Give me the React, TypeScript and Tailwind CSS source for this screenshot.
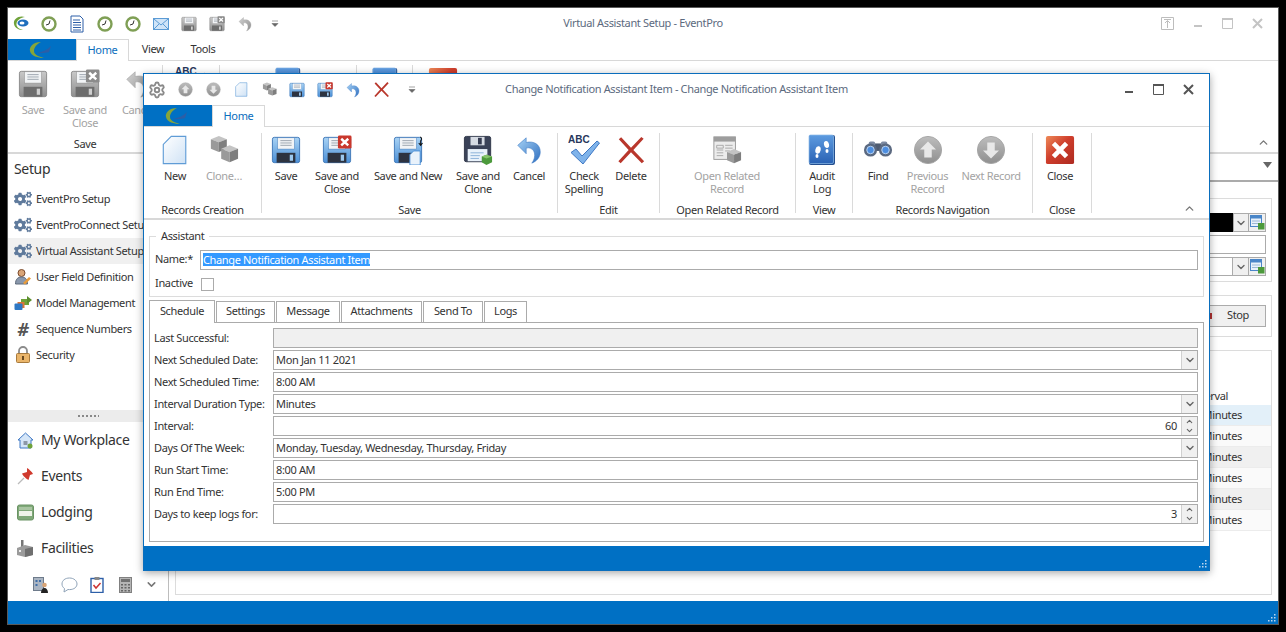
import React from 'react';
import { FaCogs } from 'react-icons/fa';
import { ChevronDown, ChevronUp, Settings } from 'lucide-react';

type Tone = 'blue' | 'gray';
type IconProps = { s?: number };

const FLOPPY: Record<Tone, { top: string; bottom: string; edge: string; dark: string }> = {
  blue: { top: '#a9d3f5', bottom: '#4b8fd6', edge: '#3f78b8', dark: '#2d3340' },
  gray: { top: '#c9c9c9', bottom: '#8f8f8f', edge: '#8a8a8a', dark: '#6d6d6d' },
};

const Floppy = ({ s = 30, tone = 'blue', children }: IconProps & { tone?: Tone; children?: React.ReactNode }) => {
  const c = FLOPPY[tone];
  return (
    <svg width={s} height={s} viewBox="0 0 32 32">
      <defs>
        <linearGradient id={`floppy-${tone}`} x1="0" y1="0" x2="0" y2="1">
          <stop offset="0" stopColor={c.top} />
          <stop offset="1" stopColor={c.bottom} />
        </linearGradient>
      </defs>
      <rect x="1.500" y="2.500" width="29" height="27" rx="2" fill={`url(#floppy-${tone})`} stroke={c.edge} />
      <rect x="7" y="3" width="18" height="12" fill="#f2f4f6" stroke={c.edge} strokeWidth="0.5" />
      <path d="M10 6h12M10 8.500h12M10 11h12" stroke="#9aa3ad" strokeWidth="1" />
      <rect x="6" y="19" width="20" height="10.500" fill={c.dark} />
      <rect x="20" y="21" width="3.500" height="6.500" fill={tone === 'blue' ? '#9cc8ee' : '#cfcfcf'} />
      {children}
    </svg>
  );
};

const XBadge = ({ tone = 'red' }: { tone?: 'red' | 'gray' }) => (
  <g>
    <rect x="17" y="0.500" width="14.500" height="14" rx="1.500" fill={tone === 'red' ? '#c9372c' : '#8b8b8b'} />
    <path d="M20.500 4l7.500 7M28 4l-7.500 7" stroke="#fff" strokeWidth="2.600" />
  </g>
);

const SaveNew = ({ s = 30 }: IconProps) => (
  <Floppy s={s}>
    <path d="M22 17h7v15H18v-11z" fill="#e9f2fb" stroke="#4b8fd6" />
    <path d="M29 2c2 1 2 3 0 5M29.500 6v4M27.500 8.500l2 2.500 2-2.500" fill="none" stroke="#111" strokeWidth="1.100" />
  </Floppy>
);

const SaveClone = ({ s = 30 }: IconProps) => (
  <svg width={s} height={s} viewBox="0 0 32 32">
    <rect x="1.500" y="1.500" width="28" height="27" rx="2" fill="#3a4258" stroke="#2e3547" />
    <rect x="8" y="2" width="15" height="9" fill="#d6dbe3" />
    <rect x="16" y="3" width="4" height="7" fill="#343b50" />
    <rect x="5" y="15" width="21" height="13" fill="#e9f2fb" />
    <path d="M8 19h14M8 22h10M8 25h9" stroke="#8ab0d8" />
    <path d="M20 23l5-2 6 2v6l-6 3-5-3z" fill="#4c9a3c" />
    <path d="M20 23l5 2 6-2-6-2z" fill="#86c56c" />
  </svg>
);

const Undo = ({ s = 30, tone = 'blue' }: IconProps & { tone?: Tone }) => (
  <svg width={s} height={s} viewBox="0 0 32 32">
    <defs>
      <linearGradient id={`undo-${tone}`} x1="0" y1="0" x2="1" y2="1">
        <stop offset="0" stopColor={tone === 'blue' ? '#a6d2f5' : '#d2d2d2'} />
        <stop offset="1" stopColor={tone === 'blue' ? '#2f6fc0' : '#8d8d8d'} />
      </linearGradient>
    </defs>
    <path
      d="M4 11 13 3V8C21 6 28 10 28 18 28 24 24 28 19 30 22 26 23 21 21 17 19 14 16 13 13 14V20z"
      fill={`url(#undo-${tone})`}
      stroke={tone === 'blue' ? '#3a78c2' : '#a0a0a0'}
      strokeWidth="0.600"
    />
  </svg>
);

const RedCross = ({ s = 30 }: IconProps) => (
  <svg width={s} height={s} viewBox="0 0 32 32">
    <path d="M3 4.500 5.500 2.500 16 13.500 27 2l2.500 2L18.500 16 30 28l-2.500 2L16 18.500 5 30l-2.500-2L13.500 16z" fill="#b9372c" />
  </svg>
);

const NewDoc = ({ s = 30 }: IconProps) => (
  <svg width={s} height={s} viewBox="0 0 32 32">
    <defs>
      <linearGradient id="new-doc" x1="0" y1="0" x2="1" y2="1">
        <stop offset="0" stopColor="#ffffff" />
        <stop offset="1" stopColor="#cfe2f5" />
      </linearGradient>
    </defs>
    <path d="M12 1.500h15.500v29H3.500V10z" fill="url(#new-doc)" stroke="#5f9cd6" strokeWidth="1.200" />
  </svg>
);

const Cube = ({ x, y, r }: { x: number; y: number; r: number }) => (
  <g>
    <path d={`M${x} ${y + r * 0.4}L${x + r} ${y}L${x + 2 * r} ${y + r * 0.4}L${x + r} ${y + r * 0.8}z`} fill="#c4c4c4" />
    <path d={`M${x} ${y + r * 0.4}L${x + r} ${y + r * 0.8}V${y + r * 2}L${x} ${y + r * 1.6}z`} fill="#9a9a9a" />
    <path d={`M${x + 2 * r} ${y + r * 0.4}L${x + r} ${y + r * 0.8}V${y + r * 2}L${x + 2 * r} ${y + r * 1.6}z`} fill="#7e7e7e" />
  </g>
);

const Cubes = ({ s = 30 }: IconProps) => (
  <svg width={s} height={s} viewBox="0 0 32 32">
    <Cube x={2} y={1} r={8.500} />
    <Cube x={13} y={11} r={9} />
  </svg>
);

const CheckAbc = ({ s = 32 }: IconProps) => (
  <svg width={s} height={s} viewBox="0 0 32 32">
    <text x="0" y="9" fontSize="10" fontWeight="700" letterSpacing="0" fill="#27375c" fontFamily="Liberation Sans, sans-serif">ABC</text>
    <path d="M3 18.500 8 15l6 7L29 7l2.500 2L15 30z" fill="#7fb3ea" stroke="#3f78c4" />
  </svg>
);

const OpenRelated = ({ s = 30 }: IconProps) => (
  <svg width={s} height={s} viewBox="0 0 32 32">
    <rect x="2" y="2" width="23" height="24" fill="#ececec" stroke="#999" />
    <rect x="2" y="2" width="23" height="5" fill="#9d9d9d" />
    <path d="M5 11h7v3H5zM5 16h7M5 19h7M5 22h7M14 11h8M14 14h8M14 17h5" fill="none" stroke="#a8a8a8" />
    <Cube x={16} y={15} r={7.500} />
  </svg>
);

const AuditLog = ({ s = 32 }: IconProps) => (
  <svg width={s} height={s} viewBox="0 0 32 32">
    <defs>
      <linearGradient id="audit-log" x1="0" y1="0" x2="0" y2="1">
        <stop offset="0" stopColor="#5d9be0" />
        <stop offset="1" stopColor="#2a62b4" />
      </linearGradient>
    </defs>
    <rect x="3" y="1" width="26" height="30" rx="2" fill="#244f8f" />
    <rect x="3" y="1" width="24.500" height="28.500" rx="1.500" fill="url(#audit-log)" stroke="#8dbbe9" strokeWidth="0.700" />
    <ellipse cx="12" cy="16" rx="2.600" ry="3.800" fill="#fff" transform="rotate(14 12 16)" />
    <ellipse cx="11" cy="22" rx="1.500" ry="2" fill="#fff" />
    <ellipse cx="20.500" cy="10.500" rx="2.500" ry="3.600" fill="#fff" transform="rotate(-12 20.500 10.500)" />
    <ellipse cx="21" cy="17" rx="1.500" ry="2" fill="#fff" />
  </svg>
);

const Binoculars = ({ s = 30 }: IconProps) => (
  <svg width={s} height={s} viewBox="0 0 32 32">
    <rect x="11" y="9" width="10" height="8" fill="#4f5c72" />
    <rect x="6" y="7" width="7" height="5" rx="2" fill="#7d8aa1" />
    <rect x="19" y="7" width="7" height="5" rx="2" fill="#7d8aa1" />
    <circle cx="8" cy="16" r="7" fill="#5b6980" />
    <circle cx="24" cy="16" r="7" fill="#5b6980" />
    <circle cx="8" cy="16" r="4" fill="#4d8ee0" stroke="#c1d9f5" />
    <circle cx="24" cy="16" r="4" fill="#4d8ee0" stroke="#c1d9f5" />
  </svg>
);

const CircleArrow = ({ s = 30, dir }: IconProps & { dir: 'up' | 'down' }) => (
  <svg width={s} height={s} viewBox="0 0 32 32">
    <defs>
      <linearGradient id="circle-arrow" x1="0" y1="0" x2="0" y2="1">
        <stop offset="0" stopColor="#bdbdbd" />
        <stop offset="1" stopColor="#8f8f8f" />
      </linearGradient>
    </defs>
    <circle cx="16" cy="16" r="14.500" fill="url(#circle-arrow)" stroke="#a5a5a5" />
    <path
      d={dir === 'up' ? 'M16 7l8.500 8.500H20V24h-8v-8.500H7.500z' : 'M16 25l8.500-8.500H20V8h-8v8.500H7.500z'}
      fill="#e8e8e8"
    />
  </svg>
);

const CloseBox = ({ s = 30 }: IconProps) => (
  <svg width={s} height={s} viewBox="0 0 32 32">
    <defs>
      <linearGradient id="close-box" x1="0" y1="0" x2="1" y2="1">
        <stop offset="0" stopColor="#ee8a58" />
        <stop offset="0.450" stopColor="#cf3e2c" />
        <stop offset="1" stopColor="#ad2a20" />
      </linearGradient>
    </defs>
    <rect x="1" y="1" width="30" height="30" rx="2" fill="url(#close-box)" />
    <path d="M9 9l14 14M23 9 9 23" stroke="#fff" strokeWidth="5" />
  </svg>
);

const Clock = () => (
  <svg width="16" height="16" viewBox="0 0 16 16">
    <circle cx="8" cy="8" r="6.500" fill="#fff" stroke="#7f9f55" strokeWidth="2.400" />
    <path d="M9 4.500 8 8 5 9" fill="none" stroke="#333" strokeWidth="1" />
  </svg>
);

const DocLines = () => (
  <svg width="16" height="18" viewBox="0 0 16 18">
    <path d="M2 1h9l3 3v13H2z" fill="#fff" stroke="#2d5fa8" />
    <path d="M4 5h7M4 7.500h8M4 10h8M4 12.500h8M4 15h8" stroke="#2d5fa8" />
  </svg>
);

const Mail = () => (
  <svg width="16" height="14" viewBox="0 0 16 14">
    <rect x="0.500" y="1.500" width="15" height="11" fill="#cfe4f8" stroke="#5b9bd5" />
    <path d="M1 2l7 6 7-6M1 12l5-5M15 12l-5-5" fill="none" stroke="#5b9bd5" />
  </svg>
);

const AppLogo = () => (
  <svg width="17" height="17" viewBox="0 0 17 17">
    <path d="M12 2C6 0 0 4 1 9c.8 4 5 6 9 6-4-1-7-3-6.500-6.500C4 5 8 2.500 12 2z" fill="#6fa23a" />
    <ellipse cx="10" cy="8" rx="5.500" ry="3.500" fill="#1f6fbd" />
    <ellipse cx="9" cy="8" rx="2.500" ry="1.500" fill="#fff" />
  </svg>
);

const TabLogo = () => (
  <svg width="26" height="18" viewBox="0 0 26 18">
    <path d="M12 1C4 1 0 6 1 10c1 5 8 7 14 7-5-1.500-10-3-10-7 0-4 3-7 7-9z" fill="#86a53a" />
    <path d="M8 12c5-1 10-3 14-7l-2 6c-3 1-7 1.500-12 1z" fill="#2c5ea6" />
  </svg>
);

const QatMenu = () => (
  <svg width="8" height="8" viewBox="0 0 8 8">
    <path d="M1 1h6M1 3.500h6l-3 3z" fill="#666" stroke="#666" strokeWidth="0.600" />
  </svg>
);

const UserField = () => (
  <svg width="18" height="18" viewBox="0 0 18 18">
    <circle cx="7.500" cy="5" r="3.500" fill="#d9a577" stroke="#7b4a2c" />
    <path d="M1.500 16c0-5 2.500-7 6-7s6 2 6 7z" fill="#8a98ac" stroke="#5f6b7b" />
    <path d="M9 15l6-6 2 1.500-6 6z" fill="#e89b3a" />
  </svg>
);

const ModelMgmt = () => (
  <svg width="18" height="18" viewBox="0 0 18 18">
    <rect x="7" y="5" width="8" height="6" fill="#6fa23a" />
    <path d="M13 2l5 4-5 4z" fill="#5c8f2e" />
    <rect x="3.500" y="8" width="7" height="6" fill="#d9743a" />
    <rect x="0.500" y="9.500" width="8" height="6.500" rx="1" fill="#2f78c4" />
  </svg>
);

const Lock = () => (
  <svg width="16" height="18" viewBox="0 0 16 18">
    <path d="M4 8V5a4 4 0 0 1 8 0v3" fill="none" stroke="#8b8b8b" strokeWidth="1.800" />
    <rect x="1.500" y="7.500" width="13" height="9" rx="1" fill="#eab56a" stroke="#a87a3c" />
    <rect x="7" y="10" width="2" height="4" fill="#6b4a1f" />
  </svg>
);

const House = () => (
  <svg width="17" height="17" viewBox="0 0 17 17">
    <path d="M8.500 1 1 8h2v8h11V8h2z" fill="#d5e6f8" stroke="#3f78c4" />
    <rect x="6.500" y="9" width="4" height="4" fill="#8c98a8" />
    <circle cx="13" cy="14" r="2.500" fill="#6fa23a" />
  </svg>
);

const Pin = () => (
  <svg width="17" height="17" viewBox="0 0 17 17">
    <path d="M1 16l6-6" stroke="#bbb" strokeWidth="1.200" />
    <path d="M10 0c2 1 5 4 6 6l-3 1-1.500 5c-2-1-5.500-4-6.500-6.500l5-1.500z" fill="#d03a2e" />
  </svg>
);

const Bed = () => (
  <svg width="17" height="17" viewBox="0 0 17 17">
    <rect x="0.500" y="1" width="16" height="15" rx="2" fill="#7fa878" stroke="#6a9364" />
    <rect x="2" y="7" width="13" height="5" fill="#eef3e8" />
    <rect x="2" y="3" width="13" height="3" fill="#a9c5a2" />
  </svg>
);

const Factory = () => (
  <svg width="18" height="17" viewBox="0 0 18 17">
    <rect x="5" y="0" width="2.500" height="7" fill="#777" />
    <path d="M1 8l8-3 8 2v8l-8 2-8-2z" fill="#9b9b9b" />
    <path d="M9 9l8-2v8l-8 2z" fill="#6f6f6f" />
    <rect x="3" y="10" width="2" height="2" fill="#eee" />
  </svg>
);

const BuildingUser = () => (
  <svg width="16" height="16" viewBox="0 0 16 16">
    <rect x="0.500" y="0.500" width="10" height="13" fill="#aab5c3" stroke="#6e7b8b" />
    <path d="M2.500 3h2v2h-2zM6 3h2v2H6zM2.500 7h2v2h-2z" fill="#3f6ea8" />
    <circle cx="11.500" cy="8" r="2.300" fill="#d9a577" />
    <path d="M8 16c0-3 1.500-5 3.500-5s3.500 2 3.500 5z" fill="#222" />
  </svg>
);

const Bubble = () => (
  <svg width="17" height="16" viewBox="0 0 17 16">
    <path d="M8.500 1C4 1 1 3.500 1 7c0 2 1 3.500 2.500 4.500L3 15l4-2.500c.5.100 1 .100 1.500.100 4.500 0 7.500-2.500 7.500-5.600S13 1 8.500 1z" fill="#fff" stroke="#8fa3b8" />
  </svg>
);

const Clipboard = () => (
  <svg width="14" height="16" viewBox="0 0 14 16">
    <rect x="1" y="1.500" width="12" height="14" fill="#fff" stroke="#2d5fa8" strokeWidth="1.400" />
    <rect x="4.500" y="0" width="5" height="3" fill="#888" />
    <path d="M3.500 8l2.500 3 4.500-5" fill="none" stroke="#c33" strokeWidth="1.500" />
  </svg>
);

const Calc = () => (
  <svg width="13" height="16" viewBox="0 0 13 16">
    <rect x="0.500" y="0.500" width="12" height="15" fill="#b5b5b5" stroke="#808080" />
    <rect x="2" y="2" width="9" height="3" fill="#717171" />
    <path d="M2 7h2v1.500H2zM5.500 7h2v1.500h-2zM9 7h2v1.500H9zM2 10h2v1.500H2zM5.500 10h2v1.500h-2zM9 10h2v1.500H9zM2 13h2v1.500H2zM5.500 13h2v1.500h-2zM9 13h2v1.500H9z" fill="#666" />
  </svg>
);

const MiniTable = () => (
  <svg width="15" height="15" viewBox="0 0 15 15">
    <rect x="0.500" y="0.500" width="11" height="11" fill="#e8f1fa" stroke="#4a86c8" />
    <rect x="0.500" y="0.500" width="11" height="3" fill="#4a86c8" />
    <path d="M2 6h8M2 8.500h8" stroke="#9cb8d6" />
    <rect x="8" y="8" width="6.500" height="6.500" fill="#4c9a3c" />
  </svg>
);

const Grip = () => (
  <svg width="9" height="9" viewBox="0 0 9 9">
    <path d="M7 1h1.500v1.500H7zM4 4h1.500v1.500H4zM7 4h1.500v1.500H7zM1 7h1.500v1.500H1zM4 7h1.500v1.500H4zM7 7h1.500v1.500H7z" fill="#bcd6ee" />
  </svg>
);

const WinMin = ({ color }: { color: string }) => (
  <svg width="10" height="14" viewBox="0 0 10 14"><rect x="1" y="8" width="8" height="2" fill={color} /></svg>
);
const WinMax = ({ color }: { color: string }) => (
  <svg width="11" height="11" viewBox="0 0 11 11"><path d="M.5.500h10v10H.5z" fill="none" stroke={color} /><rect y="0" width="11" height="2" fill={color} /></svg>
);
const WinClose = ({ color }: { color: string }) => (
  <svg width="11" height="11" viewBox="0 0 11 11"><path d="M1 1l9 9M10 1l-9 9" stroke={color} strokeWidth="2" /></svg>
);

const QatSlot = ({ children }: { children: React.ReactNode }) => (
  <div className="flex h-4 w-[28px] items-center justify-center">{children}</div>
);

const RibbonButton = ({
  w,
  icon,
  label,
  disabled,
}: {
  w: number;
  icon: React.ReactNode;
  label: React.ReactNode;
  disabled?: boolean;
}) => (
  <div className={`flex flex-col items-center leading-[13px] ${disabled ? 'text-[#a3a3a3]' : 'text-[#333]'}`} style={{ width: w }}>
    <div className="flex h-[33px] items-center justify-center">{icon}</div>
    <div className="mt-[3px] text-center">{label}</div>
  </div>
);

const RibbonGroup = ({
  w,
  pl = 0,
  title,
  children,
}: {
  w: number;
  pl?: number;
  title: string;
  children: React.ReactNode;
}) => (
  <div className="flex h-[80px] shrink-0 flex-col border-r border-[#dadada]" style={{ width: w }}>
    <div className="flex h-[70px] shrink-0" style={{ paddingLeft: pl }}>
      {children}
    </div>
    <div className="h-[10px] text-center leading-[14px] text-[#333]">{title}</div>
  </div>
);

const DialogRibbon = () => (
  <div className="relative flex h-[93px] border-b-2 border-[#d8d8d8] pt-[6px]">
    <RibbonGroup w={118} pl={9} title="Records Creation">
      <RibbonButton w={44} icon={<NewDoc />} label="New" />
      <RibbonButton w={54} icon={<Cubes />} label="Clone…" disabled />
    </RibbonGroup>
    <RibbonGroup w={296} pl={2} title="Save">
      <RibbonButton w={44} icon={<Floppy />} label="Save" />
      <RibbonButton w={58} icon={<Floppy><XBadge /></Floppy>} label={<>Save and<br />Close</>} />
      <RibbonButton w={84} icon={<SaveNew />} label="Save and New" />
      <RibbonButton w={56} icon={<SaveClone />} label={<>Save and<br />Clone</>} />
      <RibbonButton w={46} icon={<Undo />} label="Cancel" />
    </RibbonGroup>
    <RibbonGroup w={102} pl={3} title="Edit">
      <RibbonButton w={46} icon={<CheckAbc />} label={<>Check<br />Spelling</>} />
      <RibbonButton w={48} icon={<RedCross />} label="Delete" />
    </RibbonGroup>
    <RibbonGroup w={136} pl={18} title="Open Related Record">
      <RibbonButton w={98} icon={<OpenRelated />} label={<>Open Related<br />Record</>} disabled />
    </RibbonGroup>
    <RibbonGroup w={57} pl={5} title="View">
      <RibbonButton w={42} icon={<AuditLog />} label={<>Audit<br />Log</>} />
    </RibbonGroup>
    <RibbonGroup w={180} pl={4} title="Records Navigation">
      <RibbonButton w={42} icon={<Binoculars />} label="Find" />
      <RibbonButton w={57} icon={<CircleArrow dir="up" />} label={<>Previous<br />Record</>} disabled />
      <RibbonButton w={70} icon={<CircleArrow dir="down" />} label="Next Record" disabled />
    </RibbonGroup>
    <RibbonGroup w={59} pl={6} title="Close">
      <RibbonButton w={42} icon={<CloseBox />} label="Close" />
    </RibbonGroup>
    <ChevronUp className="absolute bottom-[3px] right-[13px] text-[#777]" size={13} strokeWidth={2.500} />
  </div>
);

const Row = ({ label, children }: { label: string; children: React.ReactNode }) => (
  <div className="flex h-[20px] items-center">
    <div className="w-[119px] shrink-0 text-[#333]">{label}</div>
    {children}
  </div>
);

const Input = ({ value, disabled }: { value?: string; disabled?: boolean }) => (
  <div className={`flex h-[20px] flex-1 items-center border border-[#ababab] px-[2px] text-[#333] ${disabled ? 'bg-[#f0f0f0]' : 'bg-white'}`}>
    {value}
  </div>
);

const Combo = ({ value }: { value: string }) => (
  <div className="flex h-[20px] flex-1 items-center border border-[#ababab] bg-white text-[#333]">
    <div className="flex-1 px-[2px]">{value}</div>
    <div className="flex h-full w-[16px] items-center justify-center border-l border-[#d0d0d0] bg-[#f0f0f0]">
      <ChevronDown size={12} strokeWidth={2.800} className="text-[#666]" />
    </div>
  </div>
);

const Spin = ({ value }: { value: string }) => (
  <div className="flex h-[20px] flex-1 items-center border border-[#ababab] bg-white text-[#333]">
    <div className="flex-1 pr-[4px] text-right">{value}</div>
    <div className="flex h-full w-[16px] flex-col items-center justify-center border-l border-[#d0d0d0] bg-[#f0f0f0]">
      <ChevronUp size={9} strokeWidth={2.800} className="text-[#666]" />
      <ChevronDown size={9} strokeWidth={2.800} className="text-[#666]" />
    </div>
  </div>
);

const TABS = ['Settings', 'Message', 'Attachments', 'Send To', 'Logs'];
const TAB_W = [59, 64, 81, 60, 43];

const ChangeDialog = () => (
  <div className="absolute left-[143px] top-[73px] flex h-[498px] w-[1067px] flex-col border border-[#0a6ebd] bg-white shadow-[0_2px_8px_rgba(0,0,0,0.35)]">
    {/* title bar */}
    <div className="grid h-[31px] shrink-0 grid-cols-[1fr_auto_1fr] items-center">
      <div className="-ml-[1px] flex items-center">
        <QatSlot><Settings size={18} strokeWidth={2.500} className="text-[#8a8a8a]" /></QatSlot>
        <QatSlot><CircleArrow s={15} dir="up" /></QatSlot>
        <QatSlot><CircleArrow s={15} dir="down" /></QatSlot>
        <QatSlot><NewDoc s={15} /></QatSlot>
        <QatSlot><Cubes s={15} /></QatSlot>
        <QatSlot><Floppy s={16} /></QatSlot>
        <QatSlot><Floppy s={16}><XBadge /></Floppy></QatSlot>
        <QatSlot><Undo s={16} /></QatSlot>
        <QatSlot><RedCross s={17} /></QatSlot>
        <div className="ml-[13px]"><QatMenu /></div>
      </div>
      <div className="text-[#5c6a7e]">Change Notification Assistant Item - Change Notification Assistant Item</div>
      <div className="flex items-center justify-end gap-[19px] pr-[15px]">
        <WinMin color="#555" />
        <WinMax color="#555" />
        <WinClose color="#555" />
      </div>
    </div>
    {/* tabs */}
    <div className="flex h-[22px] shrink-0 border-b border-[#d8d8d8]">
      <div className="flex w-[68px] items-center justify-center bg-[#0070c4]"><TabLogo /></div>
      <div className="-mb-px flex w-[53px] items-center justify-center border-x border-t border-[#d8d8d8] bg-white text-[#0a6ebd]">Home</div>
    </div>
    <DialogRibbon />
    {/* form */}
    <div className="flex flex-1 flex-col px-[5px] pt-[9px]">
      <div className="relative mt-[7px] h-[61px] border border-[#dcdcdc] pl-[5px] pr-[5px] pt-[13px]">
        <div className="absolute -top-[8px] left-[6px] bg-white px-[5px] leading-[14px] text-[#333]">Assistant</div>
        <div className="flex h-[20px] items-center">
          <div className="w-[45px] shrink-0 pb-[2px] text-[#333]">Name:*</div>
          <div className="flex h-[20px] flex-1 items-center border border-[#ababab] pb-[1px] pl-[2px]">
            <span className="bg-[#3399ff] leading-[13px] text-white">Change Notification Assistant Item</span>
          </div>
        </div>
        <div className="mt-[5px] flex items-center">
          <div className="w-[46px] pb-[2px] text-[#333]">Inactive</div>
          <div className="h-[13px] w-[13px] border border-[#ababab] bg-white" />
        </div>
      </div>
      <div className="mt-[2px] flex h-[23px] items-end">
        <div className="-mb-px z-10 flex h-[23px] w-[66px] items-center justify-center border-x border-t border-[#ababab] bg-white pb-[2px] text-[#333]">Schedule</div>
        {TABS.map((tab, i) => (
          <div
            key={tab}
            className="ml-[1px] flex h-[21px] items-center justify-center border-x border-t border-[#ababab] pb-[1px] text-[#333]"
            style={{ width: TAB_W[i] }}
          >
            {tab}
          </div>
        ))}
      </div>
      <div className="flex h-[220px] flex-col gap-[2px] border border-[#ababab] pl-[4px] pr-[5px] pt-[5px]">
        <Row label="Last Successful:"><Input disabled /></Row>
        <Row label="Next Scheduled Date:"><Combo value="Mon Jan 11 2021" /></Row>
        <Row label="Next Scheduled Time:"><Input value="8:00 AM" /></Row>
        <Row label="Interval Duration Type:"><Combo value="Minutes" /></Row>
        <Row label="Interval:"><Spin value="60" /></Row>
        <Row label="Days Of The Week:"><Combo value="Monday, Tuesday, Wednesday, Thursday, Friday" /></Row>
        <Row label="Run Start Time:"><Input value="8:00 AM" /></Row>
        <Row label="Run End Time:"><Input value="5:00 PM" /></Row>
        <Row label="Days to keep logs for:"><Spin value="3" /></Row>
      </div>
    </div>
    <div className="flex h-[24px] shrink-0 items-end justify-end bg-[#0070c4] p-[2px]"><Grip /></div>
  </div>
);

const NAV_ITEMS: { label: string; icon: React.ReactNode; active?: boolean }[] = [
  { label: 'EventPro Setup', icon: <FaCogs size={18} className="text-[#5f7a9c]" /> },
  { label: 'EventProConnect Setup', icon: <FaCogs size={18} className="text-[#5f7a9c]" /> },
  { label: 'Virtual Assistant Setup', icon: <FaCogs size={18} className="text-[#5f7a9c]" />, active: true },
  { label: 'User Field Definition', icon: <UserField /> },
  { label: 'Model Management', icon: <ModelMgmt /> },
  { label: 'Sequence Numbers', icon: <span className="text-[18px] font-bold italic leading-none text-[#555]">#</span> },
  { label: 'Security', icon: <Lock /> },
];

const WORKSPACES = [
  { label: 'My Workplace', icon: <House /> },
  { label: 'Events', icon: <Pin /> },
  { label: 'Lodging', icon: <Bed /> },
  { label: 'Facilities', icon: <Factory /> },
];

const Sidebar = () => (
  <div className="flex w-[161px] shrink-0 flex-col border-r border-[#bdbdbd]">
    <div className="pl-[6px] pt-[5px] text-[14px] leading-[20px] text-[#333]">Setup</div>
    <div className="mt-[7px] flex h-[224px] flex-col">
      {NAV_ITEMS.map((n) => (
        <div key={n.label} className={`flex h-[26px] items-center whitespace-nowrap text-[#333] ${n.active ? 'bg-[#f0f0f0]' : ''}`}>
          <div className="flex w-[28px] justify-center pl-[2px]">{n.icon}</div>
          <span>{n.label}</span>
        </div>
      ))}
    </div>
    <div className="flex h-[12px] items-center justify-center bg-[#ececec]">
      <div className="h-[2px] w-[22px] bg-[radial-gradient(circle,#888_1px,transparent_1px)] bg-[length:4px_2px]" />
    </div>
    <div className="flex flex-1 flex-col">
      {WORKSPACES.map((w) => (
        <div key={w.label} className="flex h-[36px] items-center text-[14px] text-[#333]">
          <div className="flex w-[33px] justify-center pl-[1px]">{w.icon}</div>
          <span className="pb-[2px]">{w.label}</span>
        </div>
      ))}
    </div>
    <div className="flex h-[33px] items-center pl-[19px]">
      <div className="flex w-[28px] justify-center"><BuildingUser /></div>
      <div className="flex w-[28px] justify-center"><Bubble /></div>
      <div className="flex w-[28px] justify-center"><Clipboard /></div>
      <div className="flex w-[28px] justify-center"><Calc /></div>
      <ChevronDown size={13} strokeWidth={2.800} className="ml-[6px] text-[#777]" />
    </div>
  </div>
);

const RightPanel = () => (
  <div className="flex min-w-0 flex-1 flex-col">
    <div className="flex h-[28px] shrink-0 items-center justify-end border-b-2 border-[#ababab] pb-[4px] pr-[6px]">
      <svg width="9" height="6" viewBox="0 0 9 6"><path d="M0 0h9L4.500 6z" fill="#666" /></svg>
    </div>
    <div className="flex flex-1 flex-col px-[6px] pb-[6px]">
      <div className="mt-[16px] flex h-[84px] flex-col items-end gap-[3px] border border-[#dcdcdc] pr-[5px] pt-[14px]">
        <div className="flex h-[19px] w-full">
          <div className="flex-1 bg-black" />
          <div className="flex w-[16px] items-center justify-center border border-[#ababab] bg-[#f0f0f0]"><ChevronDown size={12} strokeWidth={2.800} className="text-[#666]" /></div>
          <div className="flex w-[17px] items-center justify-center border border-l-0 border-[#ababab] bg-[#f0f0f0]"><MiniTable /></div>
        </div>
        <div className="h-[19px] w-full border border-[#ababab] bg-white" />
        <div className="flex h-[19px] w-full">
          <div className="flex-1 border border-[#ababab] bg-white" />
          <div className="flex w-[16px] items-center justify-center border-y border-r border-[#ababab] bg-[#f0f0f0]"><ChevronDown size={12} strokeWidth={2.800} className="text-[#666]" /></div>
          <div className="flex w-[17px] items-center justify-center border-y border-r border-[#ababab] bg-[#f0f0f0]"><MiniTable /></div>
        </div>
      </div>
      <div className="mt-[13px] flex h-[42px] items-center justify-end border border-[#dcdcdc] pr-[5px]">
        <div className="flex h-[22px] w-[67px] items-center border border-[#ababab] bg-[#f0f0f0] pb-[1px] pl-[4px] text-[#333]">
          <span className="mr-[15px] h-[6px] w-[8px] bg-[#b03030]" />
          Stop
        </div>
      </div>
      <div className="mt-[13px] flex flex-1 flex-col items-stretch border border-[#dcdcdc]">
        <div className="mt-[36px] flex h-[18px] items-center justify-end pr-[43px] text-[#333]">Interval</div>
        {[0, 1, 2, 3, 4, 5].map((i) => (
          <div
            key={i}
            className={`flex h-[21px] items-center justify-end border-b border-[#ececec] pr-[29px] text-[#333] ${i === 0 ? 'bg-[#e3f0f9]' : i % 2 === 1 ? 'bg-[#fafafa]' : 'bg-[#f0f0f0]'}`}
          >
            Minutes
          </div>
        ))}
      </div>
    </div>
  </div>
);

const MainRibbon = () => (
  <div className="relative flex h-[93px] shrink-0 border-b-2 border-[#d8d8d8] pt-[4px]">
    <div className="flex w-[155px] shrink-0 flex-col border-r border-[#dadada] pt-[2px]">
      <div className="flex h-[70px] shrink-0 pl-[3px]">
        <RibbonButton w={44} icon={<Floppy tone="gray" />} label="Save" disabled />
        <RibbonButton w={60} icon={<Floppy tone="gray"><XBadge tone="gray" /></Floppy>} label={<>Save and<br />Close</>} disabled />
        <RibbonButton w={46} icon={<Undo tone="gray" />} label="Cancel" disabled />
      </div>
      <div className="text-center leading-[14px] text-[#333]">Save</div>
    </div>
    <div className="flex w-[57px] shrink-0 justify-center border-r border-[#dadada] pt-[1px]"><CheckAbc /></div>
    <div className="flex w-[137px] shrink-0 justify-center border-r border-[#dadada] pt-[2px]"><AuditLog s={30} /></div>
    <div className="flex w-[56px] shrink-0 justify-center border-r border-[#dadada] pt-[2px]"><AuditLog s={30} /></div>
    <div className="flex w-[60px] shrink-0 justify-center pt-[2px]"><CloseBox s={30} /></div>
    <ChevronUp className="absolute bottom-[3px] right-[8px] text-[#777]" size={13} strokeWidth={2.500} />
  </div>
);

export default function App() {
  return (
    <div className="relative h-[632px] w-[1286px] overflow-hidden bg-black p-[7px] text-[11px] tracking-[-0.35px] [font-family:'Noto_Sans',sans-serif]">
      <div className="flex h-[618px] w-[1272px] flex-col border border-[#5a5a5a] bg-white">
        <div className="grid h-[31px] shrink-0 grid-cols-[1fr_auto_1fr] items-center">
          <div className="-ml-[1px] flex items-center">
            <QatSlot><AppLogo /></QatSlot>
            <QatSlot><Clock /></QatSlot>
            <QatSlot><DocLines /></QatSlot>
            <QatSlot><Clock /></QatSlot>
            <QatSlot><Clock /></QatSlot>
            <QatSlot><Mail /></QatSlot>
            <QatSlot><Floppy s={16} tone="gray" /></QatSlot>
            <QatSlot><Floppy s={16} tone="gray"><XBadge tone="gray" /></Floppy></QatSlot>
            <QatSlot><Undo s={16} tone="gray" /></QatSlot>
            <div className="ml-[12px]"><QatMenu /></div>
          </div>
          <div className="text-[#5c6a7e]">Virtual Assistant Setup - EventPro</div>
          <div className="flex items-center justify-end gap-[19px] pr-[15px]">
            <svg width="13" height="13" viewBox="0 0 13 13">
              <path d="M.5.500h12v12H.5zM6.500 11V4M4 6l2.500-2.500L9 6M3 2.500h7" fill="none" stroke="#bdbdbd" />
            </svg>
            <WinMin color="#c4c4c4" />
            <WinMax color="#c4c4c4" />
            <WinClose color="#c4c4c4" />
          </div>
        </div>
        <div className="flex h-[22px] shrink-0 border-b border-[#d8d8d8]">
          <div className="flex w-[68px] items-center justify-center bg-[#0070c4]"><TabLogo /></div>
          <div className="-mb-px flex w-[53px] items-center justify-center border-x border-t border-[#d8d8d8] bg-white text-[#0a6ebd]">Home</div>
          <div className="flex w-[48px] items-center justify-center text-[#333]">View</div>
          <div className="flex w-[52px] items-center justify-center text-[#333]">Tools</div>
        </div>
        <MainRibbon />
        <div className="flex min-h-0 flex-1">
          <Sidebar />
          <RightPanel />
        </div>
        <div className="flex h-[23px] shrink-0 items-end justify-end bg-[#0070c4] p-[2px]"><Grip /></div>
      </div>
      <ChangeDialog />
    </div>
  );
}
